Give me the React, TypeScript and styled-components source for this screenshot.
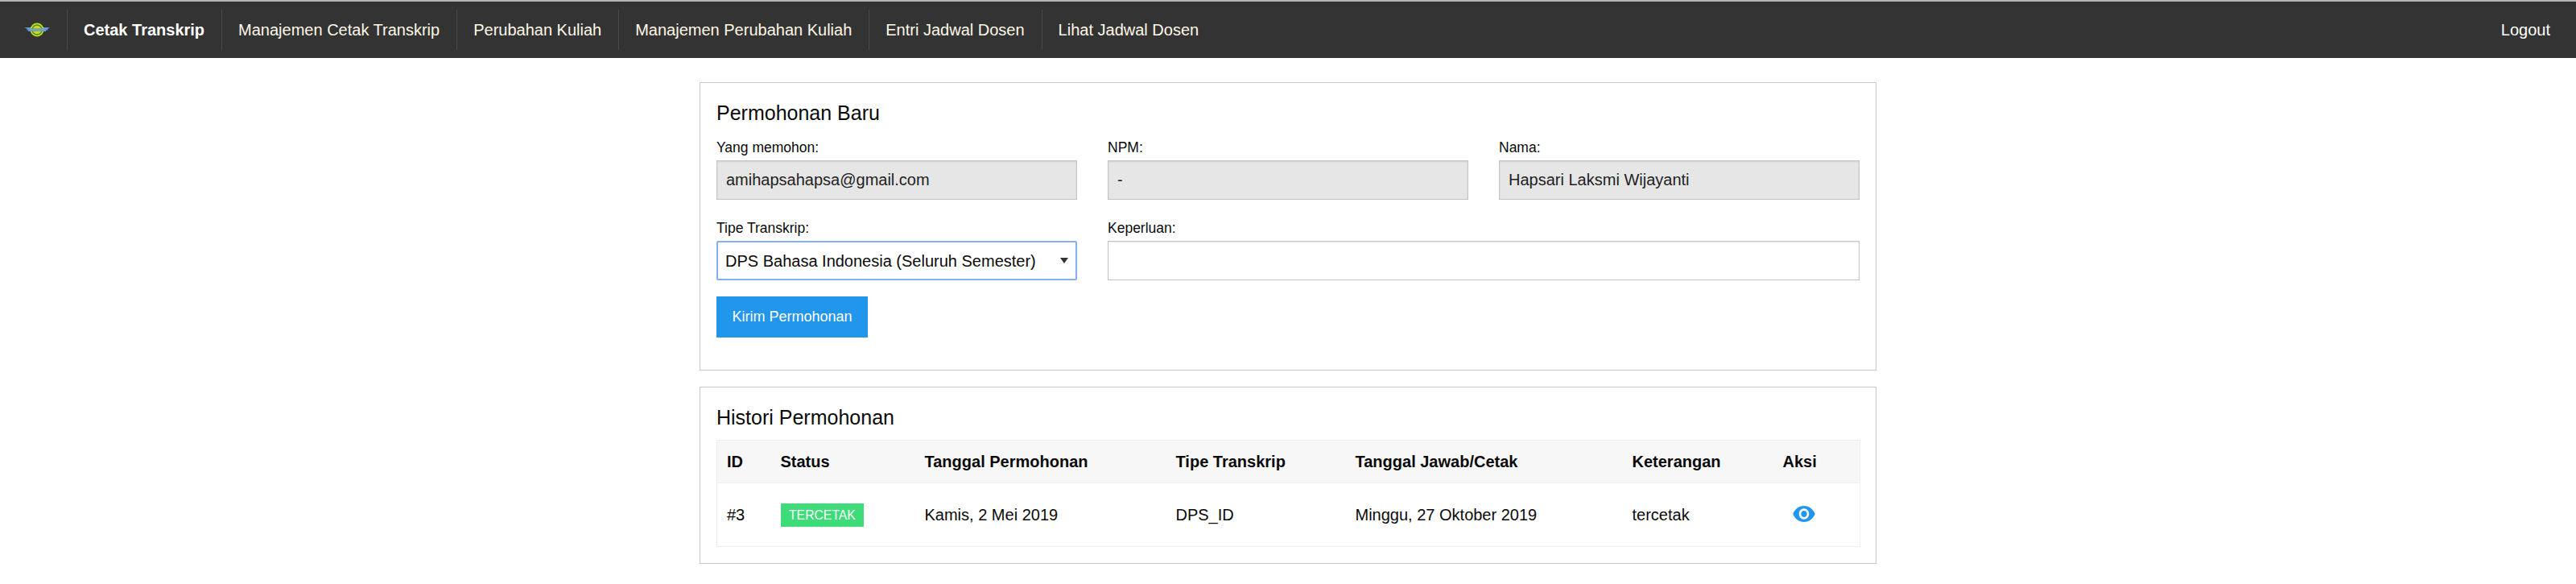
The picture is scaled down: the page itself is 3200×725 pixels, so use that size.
import { createGlobalStyle, styled } from "styled-components";

const navItems = ["Cetak Transkrip", "Manajemen Cetak Transkrip", "Perubahan Kuliah", "Manajemen Perubahan Kuliah", "Entri Jadwal Dosen", "Lihat Jadwal Dosen"];

const columns = [
  { label: "ID", width: 67 },
  { label: "Status", width: 179 },
  { label: "Tanggal Permohonan", width: 312 },
  { label: "Tipe Transkrip", width: 223 },
  { label: "Tanggal Jawab/Cetak", width: 344 },
  { label: "Keterangan", width: 187 },
  { label: "Aksi", width: 108 },
];

const App = () => {
  return (
    <>
      <GlobalStyle />
      <Navbar>
        <NavItem>
          <Logo />
        </NavItem>
        {navItems.map((item, index) => (
          <NavItem key={item} $active={index === 0} $last={index === navItems.length - 1}>
            {item}
          </NavItem>
        ))}
        <NavRight>Logout</NavRight>
      </Navbar>

      <Main>
        <Panel>
          <PanelTitle>Permohonan Baru</PanelTitle>
          <FormGrid>
            <Field>
              <Label>Yang memohon:</Label>
              <Input $readOnly readOnly value="amihapsahapsa@gmail.com" />
            </Field>
            <Field>
              <Label>NPM:</Label>
              <Input $readOnly readOnly value="-" />
            </Field>
            <Field>
              <Label>Nama:</Label>
              <Input $readOnly readOnly value="Hapsari Laksmi Wijayanti" />
            </Field>
            <Field>
              <Label>Tipe Transkrip:</Label>
              <SelectWrap>
                <Select defaultValue="DPS_ID">
                  <option value="DPS_ID">DPS Bahasa Indonesia (Seluruh Semester)</option>
                </Select>
              </SelectWrap>
            </Field>
            <Field $wide>
              <Label>Keperluan:</Label>
              <Input />
            </Field>
          </FormGrid>
          <SubmitButton>Kirim Permohonan</SubmitButton>
        </Panel>

        <Panel>
          <PanelTitle>Histori Permohonan</PanelTitle>
          <Table>
            <colgroup>
              {columns.map((column) => (
                <col key={column.label} width={column.width} />
              ))}
            </colgroup>
            <thead>
              <tr>
                {columns.map((column) => (
                  <HeadCell key={column.label}>{column.label}</HeadCell>
                ))}
              </tr>
            </thead>
            <tbody>
              <tr>
                <BodyCell>#3</BodyCell>
                <BodyCell>
                  <Badge>TERCETAK</Badge>
                </BodyCell>
                <BodyCell>Kamis, 2 Mei 2019</BodyCell>
                <BodyCell>DPS_ID</BodyCell>
                <BodyCell>Minggu, 27 Oktober 2019</BodyCell>
                <BodyCell>tercetak</BodyCell>
                <BodyCell>
                  <ViewButton>
                    <EyeIcon />
                  </ViewButton>
                </BodyCell>
              </tr>
            </tbody>
          </Table>
        </Panel>
      </Main>
    </>
  );
};

export default App;

const Logo = () => (
  <svg width="32" height="20" viewBox="0 0 32 20" aria-hidden="true">
    <path d="M0 7h32l-3 2 1 1-4 1 1 1H6l1-1-4-1 1-1z" fill="#5b9bd5" />
    <circle cx="16" cy="10" r="8.5" fill="#d8d410" />
    <circle cx="16" cy="10" r="6" fill="none" stroke="#2c9c3a" strokeWidth="1.5" />
    <path d="M5 8h22v4H5z" fill="#6a9fd0" opacity="0.85" />
  </svg>
);

const EyeIcon = () => (
  <svg width="30" height="32" viewBox="0 0 24 24" preserveAspectRatio="none" fill="#2196eb" aria-hidden="true">
    <path d="M12 4.5C7 4.5 2.73 7.61 1 12c1.73 4.39 6 7.5 11 7.5s9.27-3.11 11-7.5c-1.73-4.39-6-7.5-11-7.5zM12 17c-2.76 0-5-2.24-5-5s2.24-5 5-5 5 2.24 5 5-2.24 5-5 5zm0-8c-1.66 0-3 1.34-3 3s1.34 3 3 3 3-1.34 3-3-1.34-3-3-3z" />
  </svg>
);

const GlobalStyle = createGlobalStyle`
  * {
    box-sizing: border-box;
  }

  body {
    margin: 0;
    background: #fff;
    color: #0a0a0a;
    font-family: "Liberation Sans", Arial, sans-serif;
    font-size: 20px;
  }
`;

const Navbar = styled.nav`
  height: 72px;
  padding: 0 10px;
  display: flex;
  align-items: center;
  background-color: #333;
  border-top: 2px solid #b5b5b5;
`;

const NavItem = styled.div<{ $active?: boolean; $last?: boolean }>`
  height: 50px;
  padding: 0 21px 0 20px;
  display: flex;
  align-items: center;
  color: ${(props) => (props.$active ? "#fff" : "#fff8e7")};
  font-weight: ${(props) => (props.$active ? 700 : 400)};
  border-right: ${(props) => (props.$last ? "none" : "1px solid #4a4a4a")};
`;

const NavRight = styled.div`
  margin-left: auto;
  padding: 0 22px 0 21px;
  color: #fff;
`;

const Main = styled.main`
  width: 1462px;
  margin: 30px auto 0;
  display: flex;
  flex-direction: column;
  gap: 20px;
`;

const Panel = styled.section`
  padding: 20px;
  background: #fff;
  border: 1px solid #c8c8c8;
`;

const PanelTitle = styled.h2`
  margin: 0 0 14px;
  font-size: 25px;
  font-weight: 400;
  line-height: 34px;
`;

const FormGrid = styled.div`
  display: grid;
  grid-template-columns: repeat(3, 448px);
  column-gap: 38px;
  row-gap: 23px;
`;

const Field = styled.div<{ $wide?: boolean }>`
  display: flex;
  flex-direction: column;
  gap: 4px;
  grid-column: ${(props) => (props.$wide ? "span 2" : "span 1")};
`;

const Label = styled.label`
  font-size: 17.5px;
  line-height: 24px;
`;

const Input = styled.input<{ $readOnly?: boolean }>`
  width: 100%;
  height: 49px;
  padding: 0 11px;
  font-family: inherit;
  font-size: 20px;
  color: #222;
  background-color: ${(props) => (props.$readOnly ? "#e6e6e6" : "#fff")};
  border: 1px solid #c4c4c4;
  box-shadow: inset 0 1px 2px rgba(0, 0, 0, 0.1);
  outline: none;
`;

const SelectWrap = styled.div`
  position: relative;

  &::after {
    content: "";
    position: absolute;
    top: 21px;
    right: 11px;
    border-left: 5px solid transparent;
    border-right: 5px solid transparent;
    border-top: 7px solid #333;
    pointer-events: none;
  }
`;

const Select = styled.select`
  width: 100%;
  height: 49px;
  padding: 0 9px;
  font-family: inherit;
  font-size: 20px;
  color: #0a0a0a;
  background-color: #fff;
  border: 2px solid #82aef5;
  border-radius: 2px;
  outline: none;
  appearance: none;
`;

const SubmitButton = styled.button`
  display: block;
  width: 188px;
  height: 51px;
  margin: 20px 0;
  padding: 0;
  font-family: inherit;
  font-size: 18px;
  color: #fff;
  background-color: #2196eb;
  border: none;
`;

const Table = styled.table`
  width: 1420px;
  margin-top: -3px;
  border-collapse: collapse;
  table-layout: fixed;
  border: 1px solid #eee;
`;

const HeadCell = styled.th`
  height: 53px;
  padding: 0 12px;
  text-align: left;
  font-weight: 700;
  background-color: #f7f7f7;
  border-bottom: 1px solid #eee;
`;

const BodyCell = styled.td`
  height: 79px;
  padding: 0 12px;
`;

const Badge = styled.span`
  display: inline-block;
  padding: 0 10.5px;
  font-size: 15.75px;
  line-height: 29px;
  color: #fff;
  background-color: #3ddc79;
  vertical-align: middle;
`;

const ViewButton = styled.span`
  display: inline-flex;
  margin: 0 0 2px 11px;
  vertical-align: middle;
`;
